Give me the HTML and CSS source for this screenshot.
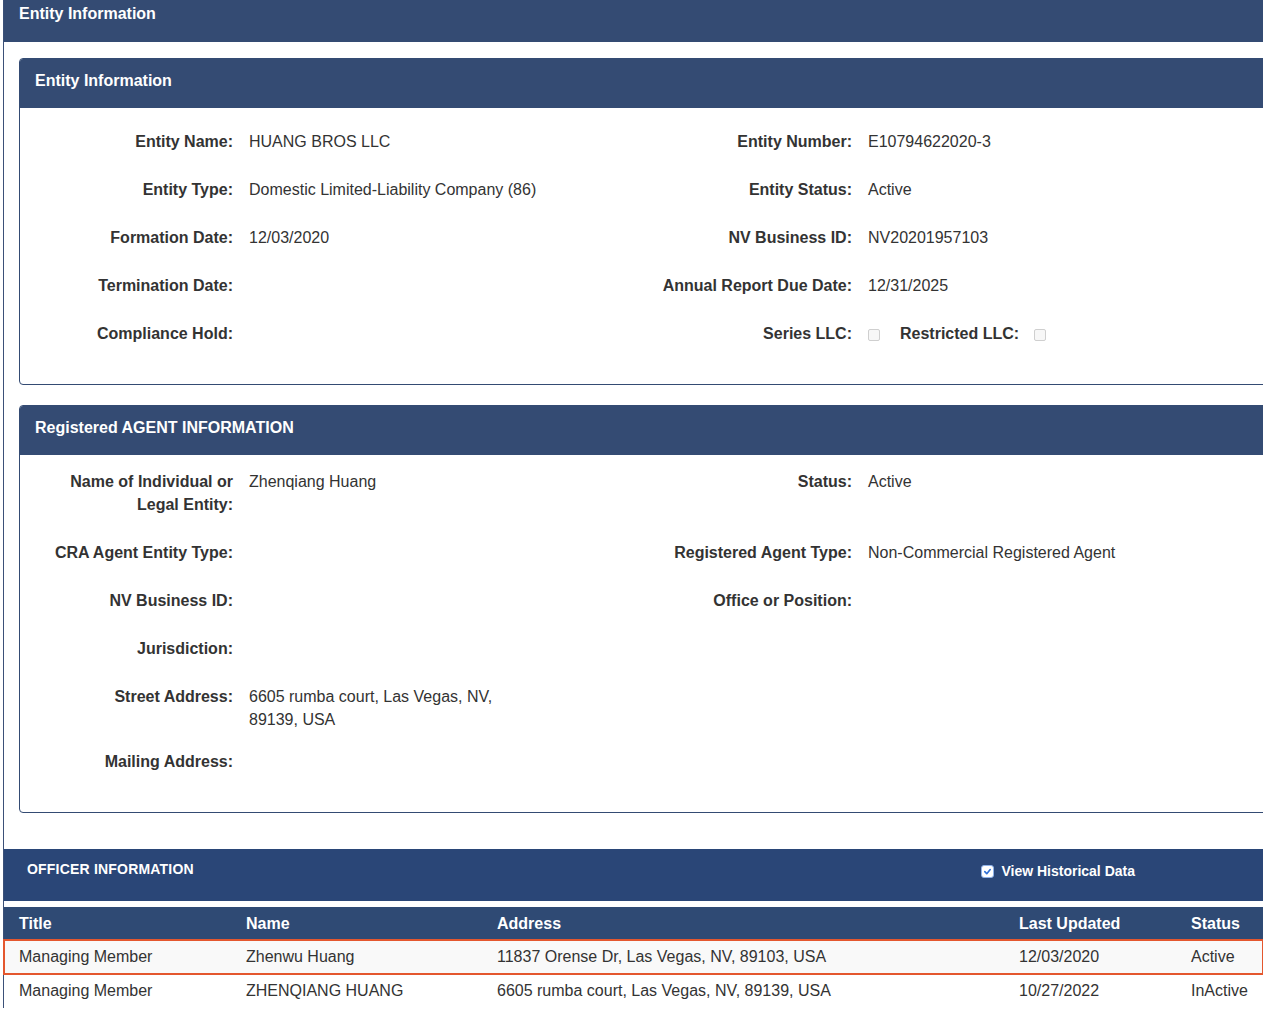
FILE: index.html
```html
<!DOCTYPE html>
<html lang="en">
<head>
    <meta charset="UTF-8">
    <title>Entity Information</title>
    <link rel="stylesheet" href="styles.css">
</head>
<body>
    <div class="page">
        <div class="outer">
            <div class="outer-head">Entity Information</div>
            <div class="outer-body">
                <section class="panel">
                    <div class="panel-head">Entity Information</div>
                    <div class="panel-body entity">
                        <div class="label">Entity Name:</div>
                        <div class="value">HUANG BROS LLC</div>
                        <div class="label">Entity Number:</div>
                        <div class="value">E10794622020-3</div>

                        <div class="label">Entity Type:</div>
                        <div class="value">Domestic Limited-Liability Company (86)</div>
                        <div class="label">Entity Status:</div>
                        <div class="value">Active</div>

                        <div class="label">Formation Date:</div>
                        <div class="value">12/03/2020</div>
                        <div class="label">NV Business ID:</div>
                        <div class="value">NV20201957103</div>

                        <div class="label">Termination Date:</div>
                        <div class="value"></div>
                        <div class="label">Annual Report Due Date:</div>
                        <div class="value">12/31/2025</div>

                        <div class="label">Compliance Hold:</div>
                        <div class="value"></div>
                        <div class="label">Series LLC:</div>
                        <div class="value inline">
                            <span class="box"></span>
                            <span class="label restricted">Restricted LLC:</span>
                            <span class="box"></span>
                        </div>
                    </div>
                </section>

                <section class="panel">
                    <div class="panel-head">Registered AGENT INFORMATION</div>
                    <div class="panel-body agent">
                        <div class="label">Name of Individual or Legal Entity:</div>
                        <div class="value">Zhenqiang Huang</div>
                        <div class="label">Status:</div>
                        <div class="value">Active</div>

                        <div class="label">CRA Agent Entity Type:</div>
                        <div class="value"></div>
                        <div class="label">Registered Agent Type:</div>
                        <div class="value">Non-Commercial Registered Agent</div>

                        <div class="label">NV Business ID:</div>
                        <div class="value"></div>
                        <div class="label">Office or Position:</div>
                        <div class="value"></div>

                        <div class="label">Jurisdiction:</div>
                        <div class="value"></div>
                        <div class="label"></div>
                        <div class="value"></div>

                        <div class="label">Street Address:</div>
                        <div class="value narrow">6605 rumba court, Las Vegas, NV, 89139, USA</div>
                        <div class="label"></div>
                        <div class="value"></div>

                        <div class="label mailing">Mailing Address:</div>
                        <div class="value"></div>
                        <div class="label"></div>
                        <div class="value"></div>
                    </div>
                </section>
            </div>
        </div>

        <div class="officers">
            <div class="officer-head">
                <span class="officer-title">OFFICER INFORMATION</span>
                <label class="history">
                    <span class="check">
                        <svg width="9" height="9" viewBox="0 0 10 10"><path d="M2 5.2 L4.2 7.4 L8 2.8" fill="none" stroke="#2f6fd6" stroke-width="1.8" stroke-linecap="round" stroke-linejoin="round"/></svg>
                    </span>
                    View Historical Data
                </label>
            </div>
            <table class="officer-table">
                <thead>
                    <tr>
                        <th class="c-title">Title</th>
                        <th class="c-name">Name</th>
                        <th class="c-addr">Address</th>
                        <th class="c-date">Last Updated</th>
                        <th>Status</th>
                    </tr>
                </thead>
                <tbody>
                    <tr class="marked">
                        <td>Managing Member</td>
                        <td>Zhenwu Huang</td>
                        <td>11837 Orense Dr, Las Vegas, NV, 89103, USA</td>
                        <td>12/03/2020</td>
                        <td>Active</td>
                    </tr>
                    <tr>
                        <td>Managing Member</td>
                        <td>ZHENQIANG HUANG</td>
                        <td>6605 rumba court, Las Vegas, NV, 89139, USA</td>
                        <td>10/27/2022</td>
                        <td>InActive</td>
                    </tr>
                </tbody>
            </table>
        </div>
    </div>
</body>
</html>
```

FILE: styles.css
```css
* {
    box-sizing: border-box;
    margin: 0;
    padding: 0;
}

body {
    font-family: "Liberation Sans", Arial, sans-serif;
    background-color: #fff;
    color: #333;
    overflow: hidden;
}

.page {
    padding-left: 3px;
    width: 1340px;
}

/* outer box */
.outer {
    border-left: 1px solid #3b5078;
}

.outer-head {
    background-color: #344b73;
    color: #fff;
    font-size: 16px;
    font-weight: bold;
    height: 42px;
    padding: 5px 0 0 15px;
}

.outer-body {
    padding: 16px 0 36px 15px;
}

.panel {
    border: 1px solid #344b73;
    border-radius: 4px;
    overflow: hidden;
    margin-bottom: 20px;
}

.panel:last-child {
    margin-bottom: 0;
}

.panel-head {
    background-color: #344b73;
    color: #fff;
    font-size: 16px;
    font-weight: bold;
    height: 49px;
    line-height: 20px;
    padding: 12px 15px 0;
}

.panel-body {
    display: grid;
    grid-template-columns: 190px 335px 252px 1fr;
    column-gap: 16px;
    row-gap: 25px;
    padding: 22px 0 39px 23px;
    font-size: 16px;
    line-height: 23px;
}

.panel-body.agent {
    padding-top: 15px;
}

.label {
    font-weight: bold;
    text-align: right;
    color: #333;
}

.value {
    color: #333;
}

.value.narrow {
    max-width: 260px;
}

.label.mailing {
    margin-top: -6px;
}

.inline {
    display: flex;
    align-items: center;
}

.restricted {
    margin: 0 15px 0 20px;
}

.box {
    display: inline-block;
    width: 12px;
    height: 12px;
    border: 1px solid #cfcfcf;
    border-radius: 2px;
    background-color: #f7f7f7;
    margin-top: 3px;
}

/* officers */
.officers {
    width: 1260px;
    border-left: 1px solid #3b5078;
}

.officer-head {
    background-color: #2a4677;
    height: 52px;
    display: flex;
    align-items: flex-start;
    justify-content: space-between;
    padding: 12px 128px 0 23px;
    color: #fff;
    font-size: 14px;
    font-weight: bold;
}

.officer-title {
    letter-spacing: 0.2px;
}

.history {
    display: flex;
    align-items: center;
    gap: 7px;
    margin-top: 2px;
}

.check {
    width: 13px;
    height: 13px;
    background-color: #fff;
    border: 1px solid #8fb2ea;
    border-radius: 3px;
    display: flex;
    align-items: center;
    justify-content: center;
}

.officer-table {
    margin-top: 6px;
    width: 100%;
    border-collapse: collapse;
    font-size: 16px;
}

.officer-table th {
    background-color: #2f4a74;
    color: #fff;
    text-align: left;
    height: 33px;
    padding: 1px 0 0 15px;
}

.officer-table td {
    height: 34px;
    padding: 0 0 0 15px;
    color: #333;
}

.c-title { width: 227px; }
.c-name { width: 251px; }
.c-addr { width: 522px; }
.c-date { width: 172px; }

.officer-table tr.marked td {
    background-color: #f9f9f9;
}

.officer-table tr.marked {
    outline: 2px solid #e4572e;
    outline-offset: -1px;
}
```
